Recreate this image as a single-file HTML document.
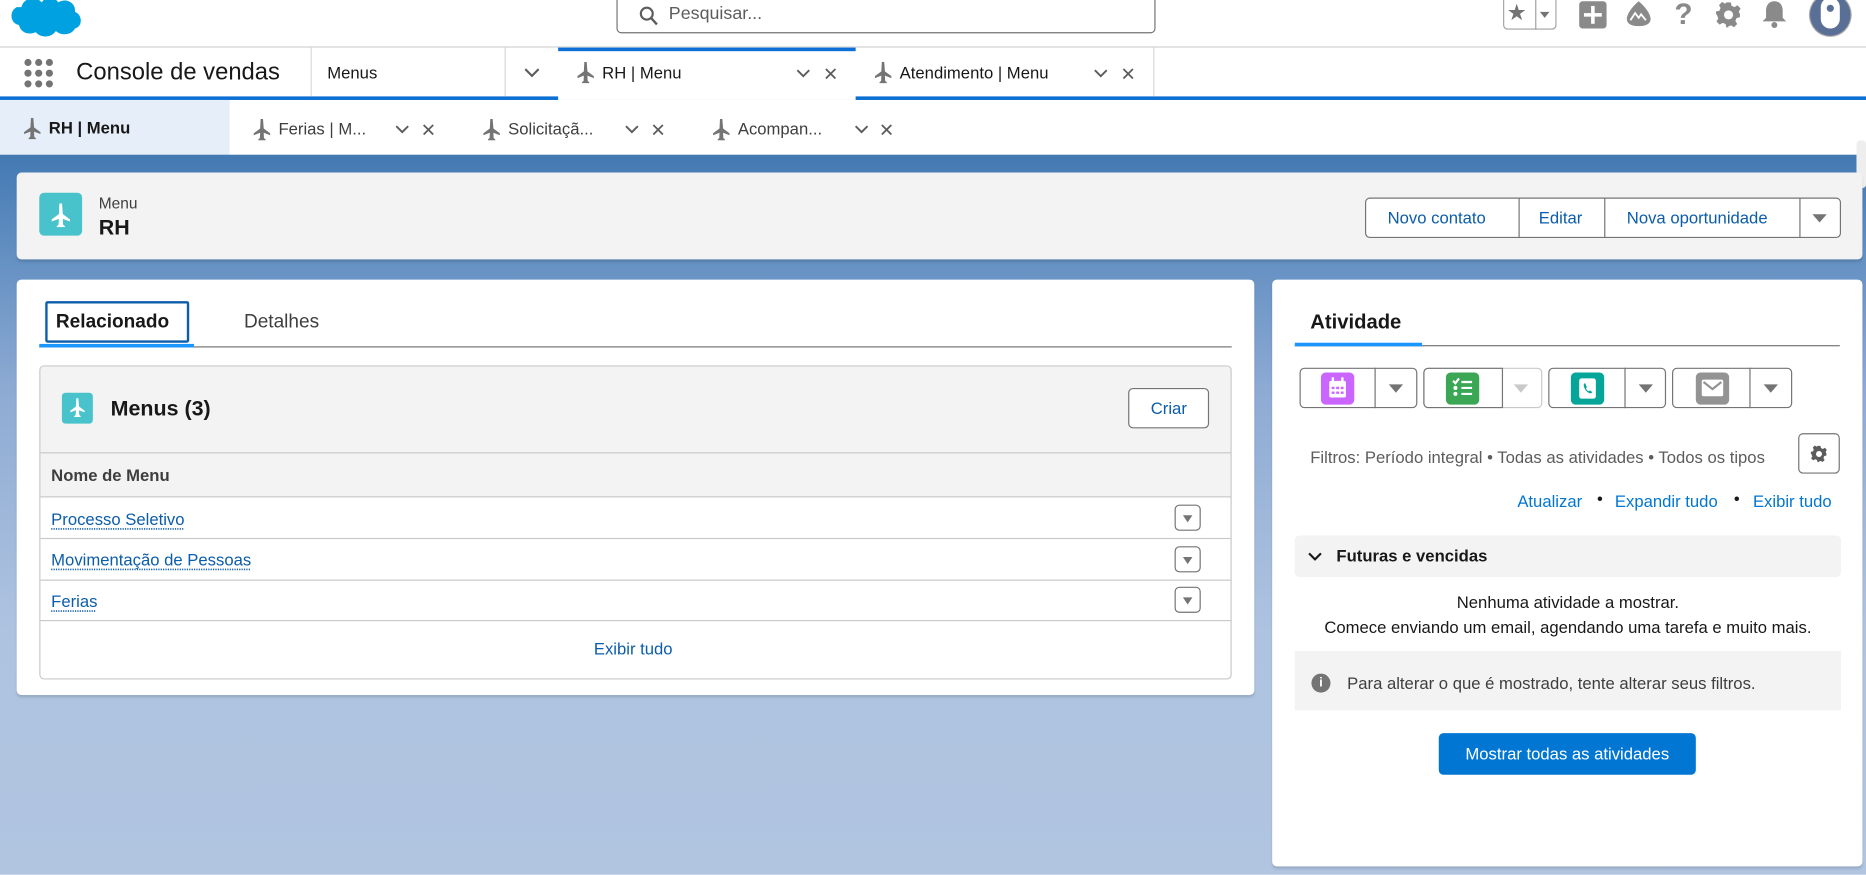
<!DOCTYPE html>
<html><head><meta charset="utf-8">
<style>
*{box-sizing:border-box;margin:0;padding:0}
html,body{width:1866px;height:875px;overflow:hidden;background:#fff}
body{font-family:"Liberation Sans",Arial,sans-serif;color:#181818}
#s{position:absolute;left:0;top:0;width:1568px;height:735px;transform:scale(1.19005);transform-origin:0 0}
.a{position:absolute}
.t{position:absolute;white-space:nowrap}
.pl{position:absolute;width:16px;height:18px}
.chev{position:absolute;width:12px;height:8px}
.x{position:absolute;width:10px;height:10px}
.lnk{color:#0b5cab;text-decoration:underline dotted;text-underline-offset:3px}
.btn{position:absolute;border:1px solid #747474;border-radius:4px;background:#fff}
.dd{position:absolute;width:22px;height:22px;border:1px solid #747474;border-radius:4px;background:#fff}
.dd:after{content:"";position:absolute;left:6px;top:8px;border-left:4px solid transparent;border-right:4px solid transparent;border-top:6px solid #747474}
.tri{position:absolute;border-left:6px solid transparent;border-right:6px solid transparent;border-top:7px solid #747474}
</style></head><body>
<svg width="0" height="0" style="position:absolute"><defs>
<symbol id="plane" viewBox="0 0 16 18"><path d="M7 0h2l.6 8 5.4 4v1.6l-5.4-2 .2 4.4 1.4 1.2V18H5v-.8l1.4-1.2.2-4.4-5.4 2V12L6.6 8z" fill="#747474"/></symbol>
<symbol id="planew" viewBox="0 0 16 18"><path d="M7 0h2l.6 8 5.4 4v1.6l-5.4-2 .2 4.4 1.4 1.2V18H5v-.8l1.4-1.2.2-4.4-5.4 2V12L6.6 8z" fill="#fff"/></symbol>
<symbol id="chv" viewBox="0 0 12 8"><path d="M1 1l5 5 5-5" fill="none" stroke="#5c5c5c" stroke-width="1.6"/></symbol>
<symbol id="xx" viewBox="0 0 10 10"><path d="M1 1l8 8M9 1l-8 8" stroke="#5c5c5c" stroke-width="1.5"/></symbol>
</defs></svg>
<div id="s">
<!-- top bar -->
<svg class="a" style="left:4px;top:-14px" width="68" height="48" viewBox="0 0 68 48"><path d="M14 20c2-8 12-10 17-4 3-5 11-5 14 0 6-4 15 0 14 8 6 2 7 12 0 14-3 6-12 6-16 2-4 6-13 6-17 1-6 3-13 0-14-6-7-1-9-11-2-15z" fill="#00a1e0"/></svg>
<div class="a" style="left:518px;top:-6px;width:453px;height:34px;border:1px solid #747474;border-radius:4px"></div>
<svg class="a" style="left:537px;top:5px" width="16" height="17" viewBox="0 0 16 17"><circle cx="6.5" cy="6.5" r="5" fill="none" stroke="#5c5c5c" stroke-width="1.8"/><path d="M10 10l5 5.5" stroke="#5c5c5c" stroke-width="2"/></svg>
<div class="t" style="left:562px;top:3px;font-size:15px;color:#5c5c5c">Pesquisar...</div>
<div class="a" style="left:1263px;top:0;width:45px;height:25px;border:1px solid #a0a0a0;border-top:none;border-radius:0 0 4px 4px"></div>
<div class="a" style="left:1290px;top:0;width:1px;height:25px;background:#a0a0a0"></div>
<div class="t" style="left:1266px;top:0px;font-size:19px;color:#747474">★</div>
<div class="a" style="left:1294px;top:10px;border-left:4px solid transparent;border-right:4px solid transparent;border-top:5px solid #747474"></div>
<div class="a" style="left:1327px;top:1px;width:23px;height:23px;background:#8a8a8a;border-radius:3px"></div>
<div class="a" style="left:1337px;top:5px;width:3px;height:15px;background:#fff"></div>
<div class="a" style="left:1331px;top:11px;width:15px;height:3px;background:#fff"></div>
<svg class="a" style="left:1365px;top:0" width="24" height="24" viewBox="0 0 24 24"><path d="M12 1C6 6 2 12 2 16c0 4 4 6 10 6s10-2 10-6c0-4-4-10-10-15z" fill="#8a8a8a"/><path d="M5 17l4-6 3 4 2-3 4 5" fill="none" stroke="#fff" stroke-width="1.5"/></svg>
<div class="t" style="left:1407px;top:-2px;font-size:25px;color:#8a8a8a;font-weight:bold">?</div>
<svg class="a" style="left:1441px;top:1px" width="23" height="23" viewBox="0 0 24 24"><path d="M10 1h4l.6 3 2.6 1.2 2.6-1.6 2.8 2.8-1.6 2.6L22 11.6V14l-3 .8-1 2.6 1.6 2.6-2.8 2.8-2.6-1.6-2.6 1L12 23h-2l-.6-3-2.6-1-2.6 1.6-2.8-2.8L3 15.2 2 12.6 1 11V9l3-.6L5 6 3.6 3.4 6.4.6 9 2.2z" fill="#8a8a8a"/><circle cx="12" cy="12" r="4" fill="#fff"/></svg>
<svg class="a" style="left:1480px;top:0" width="22" height="24" viewBox="0 0 22 24"><path d="M11 1c5 0 7 4 7 8v6l3 3H1l3-3V9c0-4 2-8 7-8z" fill="#8a8a8a"/><circle cx="11" cy="21" r="2.5" fill="#8a8a8a"/></svg>
<div class="a" style="left:1520px;top:-6px;width:36px;height:37px;border-radius:50%;background:#5a6f95;border:1px solid #aaa"></div>
<div class="a" style="left:1530px;top:-2px;width:16px;height:26px;border-radius:8px;background:#fff"></div>
<div class="a" style="left:1535px;top:4px;width:6px;height:6px;border-radius:50%;background:#5a6f95"></div>
<div class="a" style="left:0;top:39px;width:1568px;height:1px;background:#d0d0d0"></div>
<!-- nav -->
<div class="a" style="left:0;top:81px;width:1568px;height:3px;background:#0b6fd4"></div>
<svg class="a" style="left:20px;top:49px" width="25" height="25" viewBox="0 0 25 25" fill="#747474"><circle cx="3.5" cy="3.5" r="3"/><circle cx="12.5" cy="3.5" r="3"/><circle cx="21.5" cy="3.5" r="3"/><circle cx="3.5" cy="12.5" r="3"/><circle cx="12.5" cy="12.5" r="3"/><circle cx="21.5" cy="12.5" r="3"/><circle cx="3.5" cy="21.5" r="3"/><circle cx="12.5" cy="21.5" r="3"/><circle cx="21.5" cy="21.5" r="3"/></svg>
<div class="t" style="left:64px;top:50px;font-size:20px">Console de vendas</div>
<div class="a" style="left:261px;top:40px;width:1px;height:41px;background:#d8d8d8"></div>
<div class="t" style="left:275px;top:53px;font-size:14px">Menus</div>
<div class="a" style="left:424px;top:40px;width:1px;height:41px;background:#d8d8d8"></div>
<svg class="chev" style="left:440px;top:57px;width:14px;height:9px"><use href="#chv"/></svg>
<div class="a" style="left:469px;top:40px;width:250px;height:44px;background:#fff;border-top:3px solid #0b6fd4"></div>
<svg class="pl" style="left:484px;top:52px"><use href="#plane"/></svg>
<div class="t" style="left:506px;top:53px;font-size:14px">RH | Menu</div>
<svg class="chev" style="left:669px;top:58px"><use href="#chv"/></svg>
<svg class="x" style="left:693px;top:57px"><use href="#xx"/></svg>
<svg class="pl" style="left:734px;top:52px"><use href="#plane"/></svg>
<div class="t" style="left:756px;top:53px;font-size:14px">Atendimento | Menu</div>
<svg class="chev" style="left:919px;top:58px"><use href="#chv"/></svg>
<svg class="x" style="left:943px;top:57px"><use href="#xx"/></svg>
<div class="a" style="left:969px;top:40px;width:1px;height:41px;background:#d8d8d8"></div>
<!-- subtabs -->
<div class="a" style="left:0;top:84px;width:193px;height:46px;background:#e6eff9"></div>
<svg class="pl" style="left:19px;top:99px"><use href="#plane"/></svg>
<div class="t" style="left:41px;top:99px;font-size:14px;font-weight:bold">RH | Menu</div>
<svg class="pl" style="left:212px;top:100px"><use href="#plane"/></svg>
<div class="t" style="left:234px;top:100px;font-size:14px;color:#3e3e3e">Ferias | M...</div>
<svg class="chev" style="left:332px;top:105px"><use href="#chv"/></svg>
<svg class="x" style="left:355px;top:104px"><use href="#xx"/></svg>
<svg class="pl" style="left:405px;top:100px"><use href="#plane"/></svg>
<div class="t" style="left:427px;top:100px;font-size:14px;color:#3e3e3e">Solicitaçã...</div>
<svg class="chev" style="left:525px;top:105px"><use href="#chv"/></svg>
<svg class="x" style="left:548px;top:104px"><use href="#xx"/></svg>
<svg class="pl" style="left:598px;top:100px"><use href="#plane"/></svg>
<div class="t" style="left:620px;top:100px;font-size:14px;color:#3e3e3e">Acompan...</div>
<svg class="chev" style="left:718px;top:105px"><use href="#chv"/></svg>
<svg class="x" style="left:740px;top:104px"><use href="#xx"/></svg>
<!-- background -->
<div class="a" style="left:0;top:130px;width:1568px;height:605px;background:linear-gradient(#4379b2 0px,#5e8cc0 70px,#8eabd3 200px,#aec3e0 400px,#b1c5e1 605px)"></div>
<div class="a" style="left:1560px;top:118px;width:8px;height:40px;background:#eee;border-radius:3px"></div>
<!-- header card -->
<div class="a" style="left:14px;top:145px;width:1551px;height:73px;background:#f3f3f3;border-radius:4px;box-shadow:0 2px 2px rgba(0,0,0,.12)"></div>
<div class="a" style="left:33px;top:162px;width:36px;height:36px;background:#48c3cc;border-radius:4px"></div>
<svg class="pl" style="left:42px;top:171px;width:18px;height:20px"><use href="#planew"/></svg>
<div class="t" style="left:83px;top:163px;font-size:13px;color:#3e3e3e">Menu</div>
<div class="t" style="left:83px;top:181px;font-size:18px;font-weight:bold">RH</div>
<div class="btn" style="left:1147px;top:166px;width:400px;height:34px"></div>
<div class="a" style="left:1276px;top:166px;width:1px;height:34px;background:#747474"></div>
<div class="a" style="left:1348px;top:166px;width:1px;height:34px;background:#747474"></div>
<div class="a" style="left:1512px;top:166px;width:1px;height:34px;background:#747474"></div>
<div class="t" style="left:1166px;top:175px;font-size:14px;color:#0b5cab">Novo contato</div>
<div class="t" style="left:1293px;top:175px;font-size:14px;color:#0b5cab">Editar</div>
<div class="t" style="left:1367px;top:175px;font-size:14px;color:#0b5cab">Nova oportunidade</div>
<div class="tri" style="left:1523px;top:180px"></div>
<!-- left card -->
<div class="a" style="left:14px;top:235px;width:1040px;height:349px;background:#fff;border-radius:4px;box-shadow:0 2px 2px rgba(0,0,0,.12)"></div>
<div class="a" style="left:38px;top:253px;width:121px;height:35px;border:2px solid #0b5cab;border-radius:2px"></div>
<div class="t" style="left:47px;top:262px;font-size:16px;font-weight:bold">Relacionado</div>
<div class="t" style="left:205px;top:262px;font-size:16px;color:#3e3e3e">Detalhes</div>
<div class="a" style="left:33px;top:291px;width:1002px;height:1px;background:#747474"></div>
<div class="a" style="left:33px;top:289px;width:130px;height:3px;background:#1b96ff"></div>
<div class="a" style="left:33px;top:307px;width:1002px;height:264px;border:1px solid #c9c9c9;border-radius:4px;overflow:hidden">
 <div class="a" style="left:0;top:0;width:1002px;height:110px;background:#f3f3f3"></div>
 <div class="a" style="left:0;top:72px;width:1002px;height:1px;background:#c9c9c9"></div>
 <div class="a" style="left:0;top:109px;width:1002px;height:1px;background:#c9c9c9"></div>
 <div class="a" style="left:0;top:144px;width:1002px;height:1px;background:#c9c9c9"></div>
 <div class="a" style="left:0;top:179px;width:1002px;height:1px;background:#c9c9c9"></div>
 <div class="a" style="left:0;top:213px;width:1002px;height:1px;background:#c9c9c9"></div>
</div>
<div class="a" style="left:52px;top:330px;width:26px;height:26px;background:#48c3cc;border-radius:3px"></div>
<svg class="pl" style="left:58px;top:334px;width:14px;height:17px"><use href="#planew"/></svg>
<div class="t" style="left:93px;top:333px;font-size:18px;font-weight:bold">Menus (3)</div>
<div class="btn" style="left:948px;top:326px;width:68px;height:34px"></div>
<div class="t" style="left:967px;top:335px;font-size:14px;color:#0b5cab">Criar</div>
<div class="t" style="left:43px;top:391px;font-size:14px;font-weight:bold;color:#3e3e3e">Nome de Menu</div>
<div class="t lnk" style="left:43px;top:428px;font-size:14px">Processo Seletivo</div>
<div class="t lnk" style="left:43px;top:462px;font-size:14px">Movimentação de Pessoas</div>
<div class="t lnk" style="left:43px;top:497px;font-size:14px">Ferias</div>
<div class="dd" style="left:987px;top:424px"></div>
<div class="dd" style="left:987px;top:459px"></div>
<div class="dd" style="left:987px;top:493px"></div>
<div class="t" style="left:499px;top:537px;font-size:14px;color:#0b5cab">Exibir tudo</div>
<!-- right card -->
<div class="a" style="left:1069px;top:235px;width:496px;height:493px;background:#fff;border-radius:4px;box-shadow:0 2px 2px rgba(0,0,0,.12)"></div>
<div class="t" style="left:1101px;top:261px;font-size:17px;font-weight:bold">Atividade</div>
<div class="a" style="left:1088px;top:290px;width:458px;height:1px;background:#747474"></div>
<div class="a" style="left:1088px;top:288px;width:107px;height:3px;background:#1b96ff"></div>
<div class="btn" style="left:1092px;top:309px;width:99px;height:34px"></div>
<div class="a" style="left:1155px;top:309px;width:1px;height:34px;background:#747474"></div>
<div class="btn" style="left:1196px;top:309px;width:100px;height:34px;border-color:#c9c9c9"></div>
<div class="a" style="left:1196px;top:309px;width:67px;height:34px;border:1px solid #747474;border-radius:4px 0 0 4px"></div>
<div class="btn" style="left:1301px;top:309px;width:99px;height:34px"></div>
<div class="a" style="left:1365px;top:309px;width:1px;height:34px;background:#747474"></div>
<div class="btn" style="left:1405px;top:309px;width:101px;height:34px"></div>
<div class="a" style="left:1470px;top:309px;width:1px;height:34px;background:#747474"></div>
<div class="a" style="left:1110px;top:313px;width:28px;height:27px;background:#cb65ff;border-radius:4px"></div>
<svg class="a" style="left:1116px;top:317px" width="16" height="18" viewBox="0 0 16 18" fill="#fff"><rect x="1" y="3" width="14" height="14" rx="1.5"/><rect x="3" y="0" width="2" height="4"/><rect x="11" y="0" width="2" height="4"/><g fill="#cb65ff"><rect x="3" y="8" width="2.4" height="2"/><rect x="6.8" y="8" width="2.4" height="2"/><rect x="10.6" y="8" width="2.4" height="2"/><rect x="3" y="12" width="2.4" height="2"/><rect x="6.8" y="12" width="2.4" height="2"/><rect x="10.6" y="12" width="2.4" height="2"/></g></svg>
<div class="tri" style="left:1167px;top:323px"></div>
<div class="a" style="left:1215px;top:313px;width:28px;height:27px;background:#3ba755;border-radius:4px"></div>
<svg class="a" style="left:1220px;top:317px" width="18" height="18" viewBox="0 0 18 18" fill="none" stroke="#fff" stroke-width="1.8"><path d="M1 3l2 2 3-4M8 4h9M8 9h9M8 14h9"/><circle cx="3" cy="9" r=".8" fill="#fff"/><circle cx="3" cy="14" r=".8" fill="#fff"/></svg>
<div class="tri" style="left:1272px;top:323px;border-top-color:#c9c9c9"></div>
<div class="a" style="left:1320px;top:313px;width:28px;height:27px;background:#06a59a;border-radius:4px"></div>
<svg class="a" style="left:1325px;top:317px" width="18" height="19" viewBox="0 0 18 19"><rect x="2" y="1" width="14" height="17" rx="2" fill="#fff"/><path d="M7 5c-1 0-1.5 1-1 3 1 3 3 5 5 5.5 1 .2 2-.5 2-1l-2-1.5-1 .8c-1-.5-2-1.5-2.3-2.6l.8-.8z" fill="#06a59a"/></svg>
<div class="tri" style="left:1377px;top:323px"></div>
<div class="a" style="left:1425px;top:313px;width:28px;height:27px;background:#939393;border-radius:4px"></div>
<svg class="a" style="left:1429px;top:318px" width="20" height="16" viewBox="0 0 20 16"><rect x="1" y="1" width="18" height="14" rx="1.5" fill="#fff"/><path d="M2.5 3l7.5 6 7.5-6" fill="none" stroke="#939393" stroke-width="1.8"/></svg>
<div class="tri" style="left:1482px;top:323px"></div>
<div class="t" style="left:1101px;top:376px;font-size:14px;color:#5c5c5c">Filtros: Período integral • Todas as atividades • Todos os tipos</div>
<div class="btn" style="left:1511px;top:364px;width:35px;height:34px"></div>
<svg class="a" style="left:1521px;top:374px" width="15" height="15" viewBox="0 0 24 24"><path d="M10 1h4l.6 3 2.6 1.2 2.6-1.6 2.8 2.8-1.6 2.6L22 11.6V14l-3 .8-1 2.6 1.6 2.6-2.8 2.8-2.6-1.6-2.6 1L12 23h-2l-.6-3-2.6-1-2.6 1.6-2.8-2.8L3 15.2 2 12.6 1 11V9l3-.6L5 6 3.6 3.4 6.4.6 9 2.2z" fill="#5c5c5c"/><circle cx="12" cy="12" r="4" fill="#fff"/></svg>
<div class="t" style="left:1275px;top:413px;font-size:14px;color:#0176d3">Atualizar</div>
<div class="t" style="left:1313px;top:410px;font-size:14px;left:1313px"></div>
<div class="t" style="left:1342px;top:411px;font-size:14px">•</div>
<div class="t" style="left:1357px;top:413px;font-size:14px;color:#0176d3">Expandir tudo</div>
<div class="t" style="left:1457px;top:411px;font-size:14px">•</div>
<div class="t" style="left:1473px;top:413px;font-size:14px;color:#0176d3">Exibir tudo</div>
<div class="a" style="left:1088px;top:450px;width:459px;height:35px;background:#f3f3f3;border-radius:4px"></div>
<svg class="a" style="left:1099px;top:464px" width="12" height="8"><path d="M1 1l5 5 5-5" fill="none" stroke="#181818" stroke-width="1.8"/></svg>
<div class="t" style="left:1123px;top:459px;font-size:14px;font-weight:bold">Futuras e vencidas</div>
<div class="t" style="left:1088px;top:498px;width:459px;text-align:center;font-size:14px">Nenhuma atividade a mostrar.</div>
<div class="t" style="left:1088px;top:519px;width:459px;text-align:center;font-size:14px">Comece enviando um email, agendando uma tarefa e muito mais.</div>
<div class="a" style="left:1088px;top:547px;width:459px;height:50px;background:#f3f3f3"></div>
<div class="a" style="left:1102px;top:566px;width:16px;height:16px;border-radius:50%;background:#747474;color:#fff;font-size:11px;font-weight:bold;text-align:center;line-height:16px">i</div>
<div class="t" style="left:1132px;top:566px;font-size:14px;color:#3e3e3e">Para alterar o que é mostrado, tente alterar seus filtros.</div>
<div class="a" style="left:1209px;top:616px;width:216px;height:35px;background:#0176d3;border-radius:4px;color:#fff;font-size:14px;text-align:center;line-height:35px">Mostrar todas as atividades</div>
</div>
</body></html>
